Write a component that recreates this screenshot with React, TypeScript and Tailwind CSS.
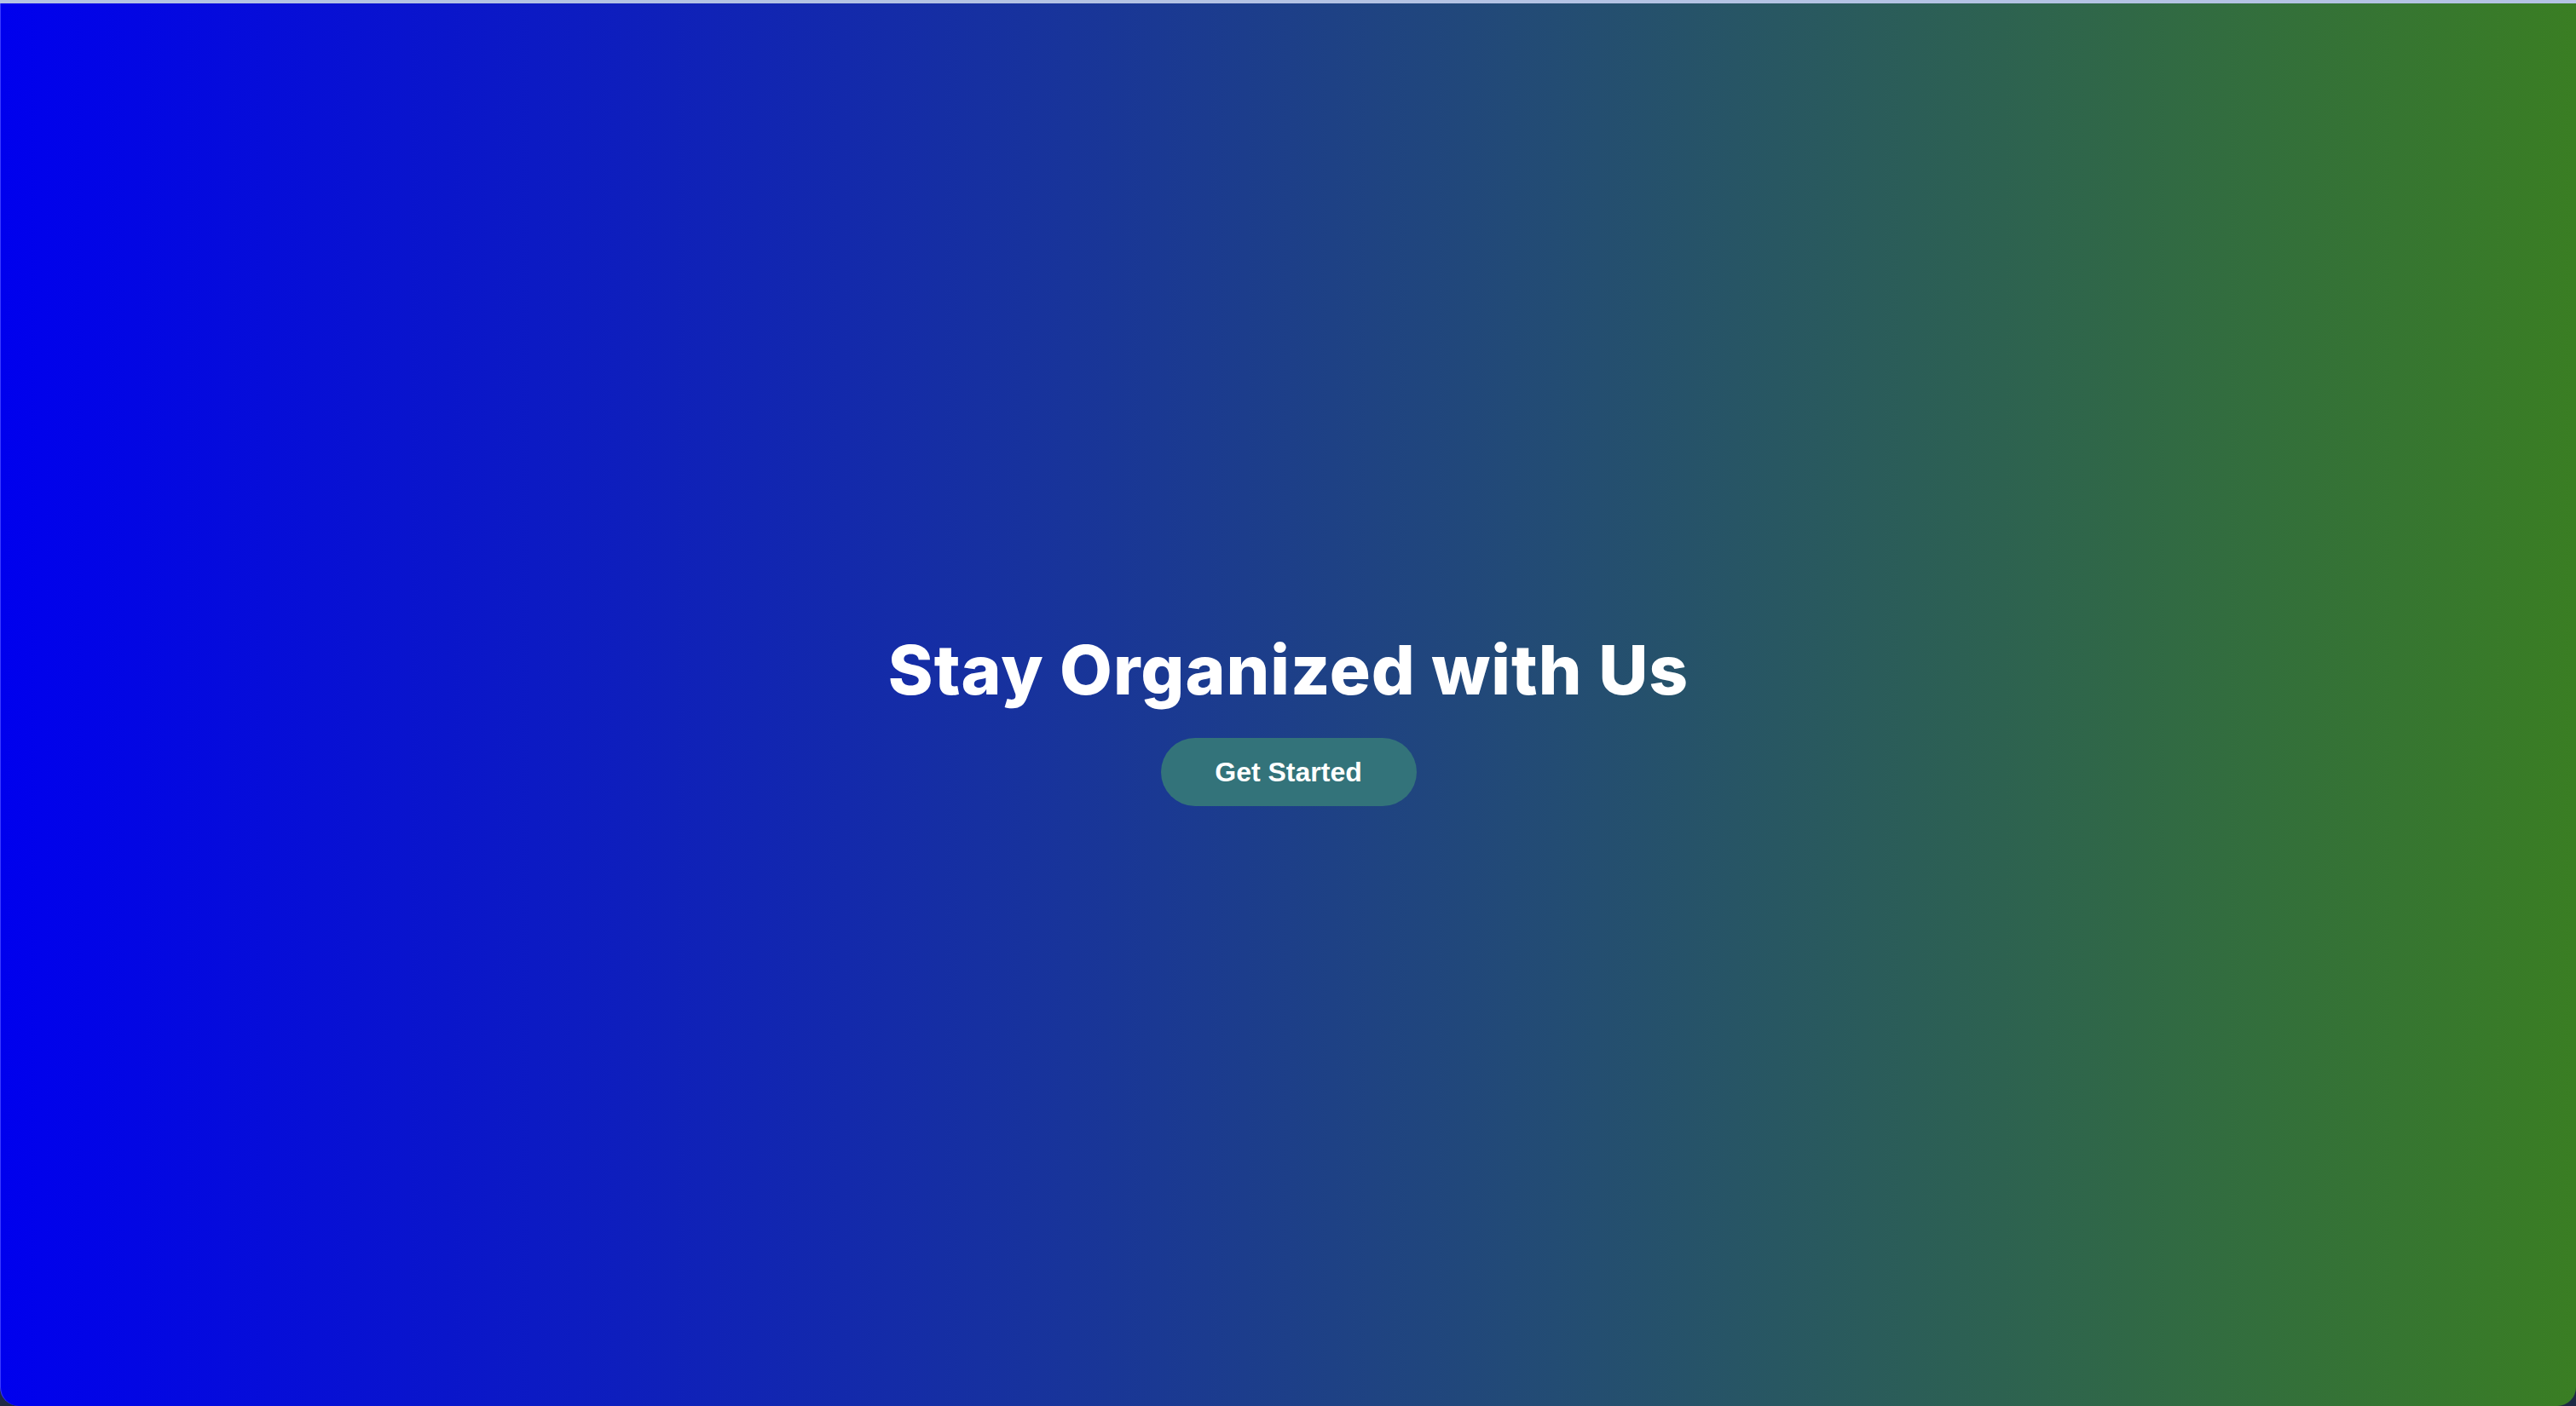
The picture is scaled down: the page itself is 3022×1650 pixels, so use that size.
import React from "react";

export default function App() {
  return (
    <div className="w-[3022px] h-[1650px] bg-[#1f2a44] flex flex-col overflow-hidden">
      <div className="h-[4px] w-full bg-[#b4c3e4] shrink-0" />
      <div className="flex-1 rounded-b-[22px] border-l border-[#3a3aff] bg-[linear-gradient(to_right,#0000ee,#3a7e23)] flex flex-col items-center justify-center pt-[38px]">
        <h1 className="text-white text-[80px] leading-none font-extrabold tracking-[1px] font-['Inter','Liberation_Sans',sans-serif]">
          Stay Organized with Us
        </h1>
        <button className="mt-[40px] w-[300px] h-[80px] rounded-full bg-[#33737a] text-white text-[32px] font-bold font-['Liberation_Sans',Arial,sans-serif] flex items-center justify-center">
          Get Started
        </button>
      </div>
    </div>
  );
}
